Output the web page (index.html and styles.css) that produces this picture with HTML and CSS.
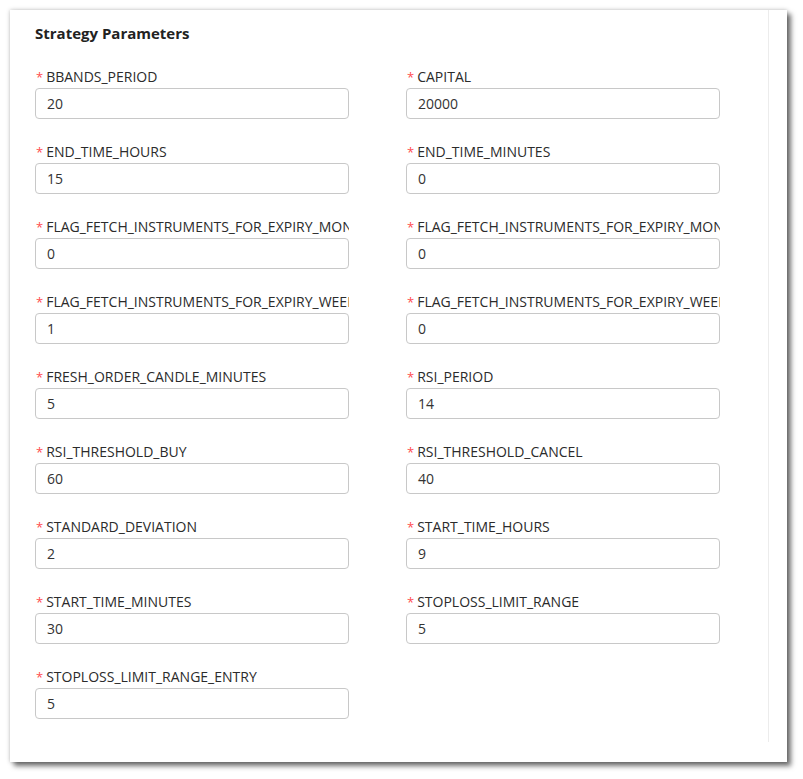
FILE: index.html
```html
<!DOCTYPE html>
<html>
<head>
<meta charset="utf-8">
<link rel="stylesheet" href="styles.css">
</head>
<body>
<div class="card">
  <div class="panel">
    <h3 class="title">Strategy Parameters</h3>
    <div class="grid">
      <div class="field"><label class="label"><span class="req">*</span>BBANDS_PERIOD</label><div class="input">20</div></div>
      <div class="field"><label class="label"><span class="req">*</span>CAPITAL</label><div class="input">20000</div></div>
      <div class="field"><label class="label"><span class="req">*</span>END_TIME_HOURS</label><div class="input">15</div></div>
      <div class="field"><label class="label"><span class="req">*</span>END_TIME_MINUTES</label><div class="input">0</div></div>
      <div class="field"><label class="label"><span class="req">*</span>FLAG_FETCH_INSTRUMENTS_FOR_EXPIRY_MONTHLY</label><div class="input">0</div></div>
      <div class="field"><label class="label"><span class="req">*</span>FLAG_FETCH_INSTRUMENTS_FOR_EXPIRY_MONTHLY_NEXT</label><div class="input">0</div></div>
      <div class="field"><label class="label"><span class="req">*</span>FLAG_FETCH_INSTRUMENTS_FOR_EXPIRY_WEEKLY</label><div class="input">1</div></div>
      <div class="field"><label class="label"><span class="req">*</span>FLAG_FETCH_INSTRUMENTS_FOR_EXPIRY_WEEKLY_NEXT</label><div class="input">0</div></div>
      <div class="field"><label class="label"><span class="req">*</span>FRESH_ORDER_CANDLE_MINUTES</label><div class="input">5</div></div>
      <div class="field"><label class="label"><span class="req">*</span>RSI_PERIOD</label><div class="input">14</div></div>
      <div class="field"><label class="label"><span class="req">*</span>RSI_THRESHOLD_BUY</label><div class="input">60</div></div>
      <div class="field"><label class="label"><span class="req">*</span>RSI_THRESHOLD_CANCEL</label><div class="input">40</div></div>
      <div class="field"><label class="label"><span class="req">*</span>STANDARD_DEVIATION</label><div class="input">2</div></div>
      <div class="field"><label class="label"><span class="req">*</span>START_TIME_HOURS</label><div class="input">9</div></div>
      <div class="field"><label class="label"><span class="req">*</span>START_TIME_MINUTES</label><div class="input">30</div></div>
      <div class="field"><label class="label"><span class="req">*</span>STOPLOSS_LIMIT_RANGE</label><div class="input">5</div></div>
      <div class="field"><label class="label"><span class="req">*</span>STOPLOSS_LIMIT_RANGE_ENTRY</label><div class="input">5</div></div>
    </div>
  </div>
</div>
</body>
</html>
```
FILE: styles.css
```css
html, body {
  margin: 0;
  padding: 0;
  background: #ffffff;
}
body {
  padding: 10px;
  font-family: "Open Sans", "Liberation Sans", sans-serif;
  color: #333333;
}
.card {
  width: 777px;
  height: 752px;
  background: #ffffff;
  box-shadow: 4px 4px 5px rgba(0, 0, 0, 0.55), 0 0 4px rgba(0, 0, 0, 0.25);
  box-sizing: border-box;
}
.panel {
  width: 759px;
  height: 732px;
  box-sizing: border-box;
  border-right: 1px solid #ececec;
  padding: 13px 0 0 25px;
}
.title {
  margin: 0;
  font-size: 15px;
  font-weight: 700;
  line-height: 20px;
  color: #222222;
}
.grid {
  margin-top: 23px;
  display: grid;
  grid-template-columns: 314px 314px;
  column-gap: 57px;
  row-gap: 22px;
}
.field {
  display: flex;
  flex-direction: column;
  min-width: 0;
}
.label {
  font-size: 14px;
  line-height: 21px;
  height: 22px;
  white-space: nowrap;
  overflow: hidden;
  color: #2b2b2b;
}
.req {
  color: #ff4d4f;
  font-size: 13px;
  margin-left: 1px;
  margin-right: 3px;
}
.input {
  height: 31px;
  box-sizing: border-box;
  border: 1px solid #c8c8c8;
  border-radius: 4px;
  padding: 0 11px;
  font-size: 14px;
  line-height: 29px;
  color: #333333;
}
```
